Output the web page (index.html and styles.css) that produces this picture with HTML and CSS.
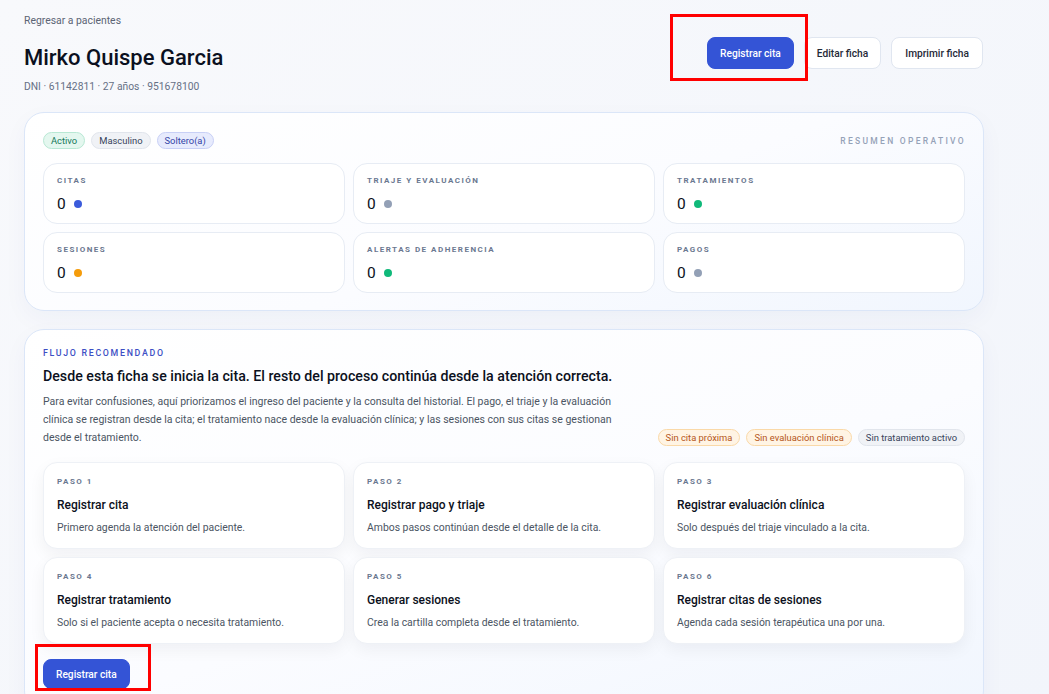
FILE: index.html
```html
<!DOCTYPE html>
<html lang="es">
<head>
    <meta charset="UTF-8">
    <meta name="viewport" content="width=device-width, initial-scale=1.0">
    <title>Ficha del paciente</title>
    <link rel="stylesheet" href="styles.css">
</head>
<body>
    <div class="page">
        <div class="header">
            <div class="patient">
                <a class="back-link" href="#">Regresar a pacientes</a>
                <h1 class="patient-name">Mirko Quispe Garcia</h1>
                <div class="patient-meta">DNI · 61142811 · 27 años · 951678100</div>
            </div>
            <div class="actions">
                <div class="marked">
                    <button class="btn btn-primary">Registrar cita</button>
                    <span class="mark mark-top"></span>
                </div>
                <button class="btn btn-light">Editar ficha</button>
                <button class="btn btn-light">Imprimir ficha</button>
            </div>
        </div>

        <div class="card summary">
            <div class="summary-top">
                <div class="chips">
                    <span class="chip chip-green">Activo</span>
                    <span class="chip chip-gray">Masculino</span>
                    <span class="chip chip-blue">Soltero(a)</span>
                </div>
                <div class="overline">RESUMEN OPERATIVO</div>
            </div>
            <div class="grid">
                <div class="stat">
                    <div class="small-label">CITAS</div>
                    <div class="stat-value">0 <span class="dot dot-blue"></span></div>
                </div>
                <div class="stat">
                    <div class="small-label">TRIAJE Y EVALUACIÓN</div>
                    <div class="stat-value">0 <span class="dot dot-gray"></span></div>
                </div>
                <div class="stat">
                    <div class="small-label">TRATAMIENTOS</div>
                    <div class="stat-value">0 <span class="dot dot-green"></span></div>
                </div>
                <div class="stat">
                    <div class="small-label">SESIONES</div>
                    <div class="stat-value">0 <span class="dot dot-orange"></span></div>
                </div>
                <div class="stat">
                    <div class="small-label">ALERTAS DE ADHERENCIA</div>
                    <div class="stat-value">0 <span class="dot dot-green"></span></div>
                </div>
                <div class="stat">
                    <div class="small-label">PAGOS</div>
                    <div class="stat-value">0 <span class="dot dot-gray"></span></div>
                </div>
            </div>
        </div>

        <div class="card flow">
            <div class="flow-label">FLUJO RECOMENDADO</div>
            <h2 class="flow-title">Desde esta ficha se inicia la cita. El resto del proceso continúa desde la atención correcta.</h2>
            <div class="flow-intro">
                <p class="flow-text">Para evitar confusiones, aquí priorizamos el ingreso del paciente y la consulta del historial. El pago, el triaje y la evaluación clínica se registran desde la cita; el tratamiento nace desde la evaluación clínica; y las sesiones con sus citas se gestionan desde el tratamiento.</p>
                <div class="chips">
                    <span class="chip chip-orange">Sin cita próxima</span>
                    <span class="chip chip-orange">Sin evaluación clínica</span>
                    <span class="chip chip-gray">Sin tratamiento activo</span>
                </div>
            </div>
            <div class="grid">
                <div class="step">
                    <div class="small-label">PASO 1</div>
                    <div class="step-title">Registrar cita</div>
                    <div class="step-text">Primero agenda la atención del paciente.</div>
                </div>
                <div class="step">
                    <div class="small-label">PASO 2</div>
                    <div class="step-title">Registrar pago y triaje</div>
                    <div class="step-text">Ambos pasos continúan desde el detalle de la cita.</div>
                </div>
                <div class="step">
                    <div class="small-label">PASO 3</div>
                    <div class="step-title">Registrar evaluación clínica</div>
                    <div class="step-text">Solo después del triaje vinculado a la cita.</div>
                </div>
                <div class="step">
                    <div class="small-label">PASO 4</div>
                    <div class="step-title">Registrar tratamiento</div>
                    <div class="step-text">Solo si el paciente acepta o necesita tratamiento.</div>
                </div>
                <div class="step">
                    <div class="small-label">PASO 5</div>
                    <div class="step-title">Generar sesiones</div>
                    <div class="step-text">Crea la cartilla completa desde el tratamiento.</div>
                </div>
                <div class="step">
                    <div class="small-label">PASO 6</div>
                    <div class="step-title">Registrar citas de sesiones</div>
                    <div class="step-text">Agenda cada sesión terapéutica una por una.</div>
                </div>
            </div>
            <div class="flow-actions">
                <div class="marked">
                    <button class="btn btn-primary">Registrar cita</button>
                    <span class="mark mark-bottom"></span>
                </div>
            </div>
        </div>
    </div>
</body>
</html>
```

FILE: styles.css
```css
body {
    margin: 0;
    font-family: Roboto, "Liberation Sans", sans-serif;
    background: linear-gradient(135deg, #f8f9fc 0%, #f2f5fb 100%);
    color: #0f172a;
    min-height: 694px;
}
.page {
    width: 960px;
    padding: 13px 0 0 24px;
}
.header {
    display: flex;
    justify-content: space-between;
    align-items: flex-start;
    margin-bottom: 17px;
}
.back-link {
    display: block;
    font-size: 10.4px;
    line-height: 16px;
    color: #5b6474;
    text-decoration: none;
}
.patient-name {
    margin: 14px 0 0;
    font-size: 22px;
    line-height: 30px;
    font-weight: 500;
    color: #0b1020;
}
.patient-meta {
    margin-top: 6px;
    font-size: 10.3px;
    line-height: 16px;
    color: #667085;
}
.actions {
    display: flex;
    gap: 10px;
    margin-top: 24px;
    margin-right: 1px;
}
.btn {
    height: 32px;
    padding: 0 12px;
    border-radius: 8px;
    font-family: inherit;
    font-size: 10.2px;
    font-weight: 500;
    cursor: pointer;
}
.btn-primary {
    background-color: #3454d6;
    border: 1px solid #3454d6;
    color: white;
}
.btn-light {
    background-color: white;
    border: 1px solid #e0e6f0;
    color: #1f2937;
}
.actions .btn-light:last-child {
    padding: 0 13px;
}
.marked {
    position: relative;
}
.mark {
    position: absolute;
    border: 3px solid #ff0000;
    box-sizing: border-box;
    pointer-events: none;
}
.mark-top {
    left: -37px;
    top: -23px;
    width: 138px;
    height: 67px;
}
.mark-bottom {
    left: -8px;
    top: -15px;
    width: 116px;
    height: 47px;
}
.card {
    border: 1px solid #dbe6f8;
    border-radius: 20px;
    background: linear-gradient(160deg, #ffffff 0%, #fbfcff 55%, #f1f6fe 100%);
    box-shadow: 0 8px 24px rgba(30, 60, 120, 0.04);
}
.summary {
    padding: 19px 18px 17px;
    margin-bottom: 18px;
}
.summary-top {
    display: flex;
    justify-content: space-between;
    align-items: center;
    margin-bottom: 14px;
}
.chips {
    display: flex;
    gap: 6px;
}
.chip {
    height: 17px;
    line-height: 15px;
    padding: 0 7px;
    box-sizing: border-box;
    border-radius: 999px;
    font-size: 9.4px;
    border: 1px solid;
}
.chip-green {
    background-color: #e4f7ef;
    border-color: #b8e8d4;
    color: #14785a;
}
.chip-gray {
    background-color: #f0f2f6;
    border-color: #e1e5ec;
    color: #36425a;
}
.chip-blue {
    background-color: #e7ebfd;
    border-color: #c8d0f6;
    color: #3344a6;
}
.chip-orange {
    background-color: #fff4e4;
    border-color: #fad9a8;
    color: #b5561a;
}
.overline {
    font-size: 8.5px;
    font-weight: 500;
    letter-spacing: 2.3px;
    color: #95a2b8;
    margin-right: -1px;
}
.grid {
    display: grid;
    grid-template-columns: repeat(3, 1fr);
    gap: 8px;
}
.stat {
    background-color: white;
    border: 1px solid #e7ecf4;
    border-radius: 14px;
    padding: 11px 13px 9px;
}
.small-label {
    font-size: 8px;
    line-height: 12px;
    font-weight: 700;
    letter-spacing: 1.5px;
    color: #6b7890;
}
.stat-value {
    display: flex;
    align-items: center;
    gap: 8px;
    margin-top: 7px;
    font-size: 15.5px;
    line-height: 20px;
    color: #0b1020;
}
.dot {
    width: 8px;
    height: 8px;
    border-radius: 50%;
}
.dot-blue {
    background-color: #3b5bdb;
}
.dot-gray {
    background-color: #93a0b6;
}
.dot-green {
    background-color: #10b97a;
}
.dot-orange {
    background-color: #f59c0b;
}
.flow {
    padding: 16px 18px 4px;
    min-height: 360px;
}
.flow-label {
    font-size: 8.8px;
    line-height: 14px;
    font-weight: 500;
    letter-spacing: 1.7px;
    color: #3c4fc4;
}
.flow-title {
    margin: 5px 0 0;
    font-size: 14.2px;
    line-height: 22px;
    font-weight: 500;
    color: #0b1020;
}
.flow-intro {
    display: flex;
    justify-content: space-between;
    align-items: flex-end;
    margin-top: 6px;
    margin-bottom: 15px;
}
.flow-text {
    margin: 0;
    width: 580px;
    font-size: 10.5px;
    line-height: 18px;
    color: #4b5563;
}
.flow-intro .chips {
    margin-bottom: 1px;
}
.step {
    background-color: white;
    border: 1px solid #eef1f6;
    border-radius: 14px;
    padding: 13px 13px 14px;
    height: 87px;
    box-sizing: border-box;
    box-shadow: 0 6px 16px rgba(15, 23, 42, 0.05);
}
.step-title {
    margin-top: 8px;
    font-size: 12px;
    line-height: 18px;
    font-weight: 500;
    color: #0b1020;
}
.step-text {
    margin-top: 6px;
    font-size: 10.4px;
    line-height: 16px;
    color: #4b5563;
}
.flow-actions {
    margin-top: 15px;
}
.flow-actions .btn {
    height: 30px;
}
```
